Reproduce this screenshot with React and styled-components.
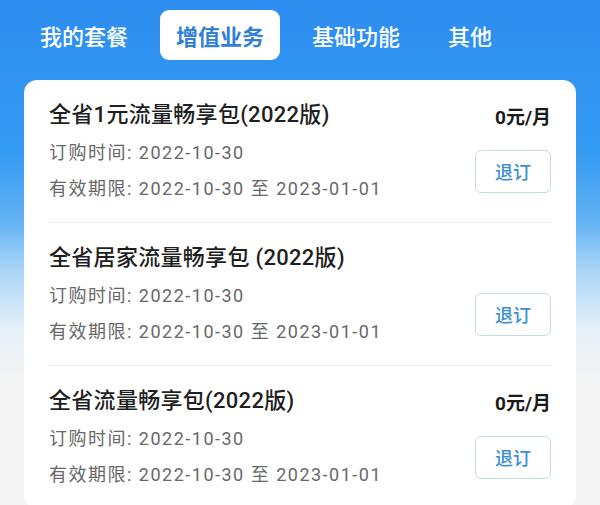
import styled, { createGlobalStyle } from "styled-components";

const GlobalStyle = createGlobalStyle`
  html, body {
    margin: 0;
    padding: 0;
  }
  body {
    font-family: "Roboto", "Noto Sans CJK SC", "Noto Sans", sans-serif;
    background: #f5f5f5;
  }
`;

const Page = styled.div`
  min-height: 505px;
  background: linear-gradient(
    180deg,
    #2e8df0 0px,
    #339af3 150px,
    #62b2f4 220px,
    #a9d5f7 270px,
    #e6f0f8 330px,
    #f5f5f5 385px
  );
  overflow: hidden;
`;

const Tabs = styled.nav`
  display: flex;
  align-items: center;
  gap: 16px;
  padding: 10px 0 0 24px;
`;

const Tab = styled.div`
  height: 50px;
  display: flex;
  align-items: center;
  padding: 0 16px;
  border-radius: 9px;
  font-family: "Noto Sans CJK SC", sans-serif;
  font-size: 22px;
  font-weight: ${(p) => (p.$active ? 700 : 500)};
  color: ${(p) => (p.$active ? "#2f80d6" : "#ffffff")};
  background: ${(p) => (p.$active ? "#ffffff" : "transparent")};
`;

const Card = styled.section`
  margin: 20px 24px 0;
  background: #ffffff;
  border-radius: 13px;
  padding: 0 25px;
`;

const Item = styled.div`
  padding: 21px 0 15px;
  border-bottom: 1px solid #ececec;
  &:last-child {
    border-bottom: none;
  }
`;

const TitleRow = styled.div`
  display: flex;
  justify-content: space-between;
  align-items: center;
  height: 28px;
`;

const Title = styled.h3`
  margin: 0;
  font-size: 22px;
  font-weight: 500;
  color: #1f1f1f;
  line-height: 28px;
  letter-spacing: 0.3px;
`;

const Price = styled.span`
  font-size: 19px;
  font-weight: 700;
  color: #1a1a1a;
`;

const InfoRow = styled.div`
  display: flex;
  justify-content: space-between;
  align-items: center;
  margin-top: 6px;
`;

const Lines = styled.div`
  display: flex;
  flex-direction: column;
`;

const Line = styled.p`
  margin: 0;
  font-size: 18px;
  line-height: 36px;
  letter-spacing: 1.5px;
  color: #686868;
`;

const Button = styled.button`
  width: 76px;
  height: 43px;
  border: 1px solid #c9dbe2;
  border-radius: 6px;
  background: #ffffff;
  color: #3b8fd1;
  font-family: "Noto Sans CJK SC", sans-serif;
  font-size: 18px;
  font-weight: 500;
  cursor: pointer;
`;

const tabs = [
  { name: "我的套餐" },
  { name: "增值业务", active: true },
  { name: "基础功能" },
  { name: "其他" },
];

const items = [
  {
    title: "全省1元流量畅享包(2022版)",
    price: "0元/月",
    ordered: "2022-10-30",
    from: "2022-10-30",
    to: "2023-01-01",
  },
  {
    title: "全省居家流量畅享包 (2022版)",
    ordered: "2022-10-30",
    from: "2022-10-30",
    to: "2023-01-01",
  },
  {
    title: "全省流量畅享包(2022版)",
    price: "0元/月",
    ordered: "2022-10-30",
    from: "2022-10-30",
    to: "2023-01-01",
  },
];

export default function App() {
  return (
    <Page>
      <GlobalStyle />
      <Tabs>
        {tabs.map((t) => (
          <Tab key={t.name} $active={t.active}>
            {t.name}
          </Tab>
        ))}
      </Tabs>
      <Card>
        {items.map((item) => (
          <Item key={item.title}>
            <TitleRow>
              <Title>{item.title}</Title>
              {item.price ? <Price>{item.price}</Price> : null}
            </TitleRow>
            <InfoRow>
              <Lines>
                <Line>订购时间: {item.ordered}</Line>
                <Line>
                  有效期限: {item.from} 至 {item.to}
                </Line>
              </Lines>
              <Button>退订</Button>
            </InfoRow>
          </Item>
        ))}
      </Card>
    </Page>
  );
}
